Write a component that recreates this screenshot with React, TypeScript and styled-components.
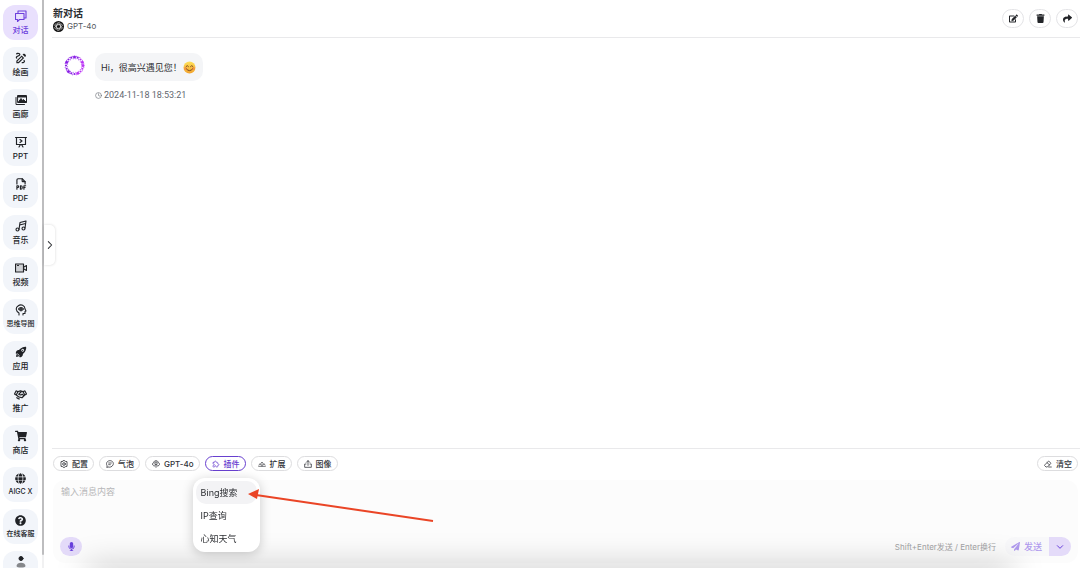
import React from 'react';
import styled, { createGlobalStyle } from 'styled-components';
import {
  FaShoppingCart, FaGlobe, FaEdit, FaTrash, FaShare, FaPaperPlane, FaMicrophone, FaQuestionCircle,
} from 'react-icons/fa';
import { TbFileTypePdf, TbPuzzle } from 'react-icons/tb';
import { IoRocket } from 'react-icons/io5';
import { PiHandshakeBold } from 'react-icons/pi';
import { MdOutlineDraw } from 'react-icons/md';
import { FiClock } from 'react-icons/fi';

const GlobalStyle = createGlobalStyle`
  * { box-sizing: border-box; }
  body {
    margin: 0;
    overflow: hidden;
    background: #fff;
    color: #2b2d31;
    font-family: Inter, "Noto Sans CJK SC", sans-serif;
    font-size: 9px;
  }
  button, textarea { font: inherit; color: inherit; }
  button { border: 0; background: none; padding: 0; cursor: pointer; }
  svg { display: block; flex: none; }
`;

const Page = styled.div`
  display: flex;
  height: 100vh;
  overflow: hidden;
`;

const Sidebar = styled.nav`
  display: flex;
  flex: none;
  flex-direction: column;
  gap: 7px;
  width: 42px;
  padding: 5px 4px 0 3px;
  overflow: hidden;
`;

const SideItem = styled.button<{ $active?: boolean; $small?: boolean }>`
  display: flex;
  flex: none;
  flex-direction: column;
  align-items: center;
  gap: 2px;
  height: 35px;
  padding-top: 5px;
  border-radius: 12px;
  background: ${(p) => (p.$active ? '#e9e0fd' : '#f2f5fa')};
  color: ${(p) => (p.$active ? '#6d3fdc' : '#202226')};
  font-size: ${(p) => (p.$small ? 7 : 8)}px;
  line-height: 12px;
  font-weight: 500;
  white-space: nowrap;
`;

const IconBox = styled.span`
  display: flex;
  align-items: center;
  justify-content: center;
  height: 12px;
`;

const ScrollTrack = styled.div`
  flex: none;
  width: 2px;
  padding-bottom: 13px;
  background: #f1f1f2;
`;

const ScrollThumb = styled.div`
  height: 100%;
  background: #bdbdbf;
  border-radius: 0 0 2px 2px;
`;

const Main = styled.main`
  position: relative;
  display: flex;
  flex: 1;
  flex-direction: column;
  min-width: 0;
  padding-left: 8px;
`;

const Handle = styled.button`
  position: absolute;
  left: 0;
  top: 225px;
  display: flex;
  align-items: center;
  justify-content: center;
  width: 11px;
  height: 40px;
  border-radius: 0 5px 5px 0;
  background: #fff;
  box-shadow: 0 0 3px rgba(0, 0, 0, 0.16);
`;

const Header = styled.header`
  display: flex;
  align-items: center;
  justify-content: space-between;
  height: 38px;
  padding: 0 2px 0 1px;
  border-bottom: 1px solid #e9e9eb;
`;

const Heading = styled.div`
  padding-top: 2px;
`;

const Title = styled.h1`
  margin: 0;
  font-size: 10px;
  line-height: 13px;
  font-weight: 700;
`;

const Model = styled.div`
  display: flex;
  align-items: center;
  gap: 3px;
  color: #55585e;
  font-size: 8px;
  line-height: 12px;
`;

const Actions = styled.div`
  display: flex;
  gap: 5px;
`;

const RoundButton = styled.button`
  display: flex;
  align-items: center;
  justify-content: center;
  width: 22px;
  height: 19px;
  border: 1px solid #e4e4e7;
  border-radius: 10px;
  color: #222428;
`;

const Conversation = styled.section`
  display: flex;
  flex: 1;
  align-items: flex-start;
  gap: 10px;
  min-height: 0;
  padding: 15px 12px;
`;

const Avatar = styled.div`
  padding-top: 2px;
`;

const Message = styled.div`
  display: flex;
  flex-direction: column;
  align-items: flex-start;
  gap: 8px;
`;

const Bubble = styled.div`
  display: flex;
  align-items: center;
  gap: 1px;
  height: 28px;
  padding: 0 7px 0 6px;
  border-radius: 10px;
  background: #f4f5f7;
  white-space: nowrap;
`;

const Time = styled.time`
  display: flex;
  align-items: center;
  gap: 2px;
  color: #63676f;
  font-family: Roboto, sans-serif;
  font-size: 9px;
  line-height: 12px;
`;

const Composer = styled.footer`
  flex: none;
  padding: 7px 2px 5px 1px;
  border-top: 1px solid #e9e9eb;
`;

const Toolbar = styled.div`
  display: flex;
  gap: 5px;
  margin-bottom: 9px;
`;

const Chip = styled.button<{ $active?: boolean; $end?: boolean }>`
  display: flex;
  align-items: center;
  gap: 4px;
  height: 15px;
  margin-left: ${(p) => (p.$end ? 'auto' : '0')};
  padding: 0 5px 0 6px;
  border: 1px solid ${(p) => (p.$active ? '#6840cf' : '#dddddf')};
  border-radius: 8px;
  color: ${(p) => (p.$active ? '#6840cf' : '#303238')};
  font-size: 8px;
  line-height: 12px;
  font-weight: 500;
  white-space: nowrap;
`;

const PluginAnchor = styled.div`
  position: relative;
`;

const Menu = styled.div`
  position: absolute;
  z-index: 3;
  left: -12px;
  top: 22px;
  width: 67px;
  padding: 3px 3px 2px;
  border-radius: 12px;
  background: #fff;
  box-shadow: 0 2px 12px rgba(0, 0, 0, 0.2);
`;

const MenuItem = styled.button<{ $active?: boolean }>`
  display: block;
  width: 100%;
  height: 23px;
  padding: 0 5px;
  border-radius: 10px;
  background: ${(p) => (p.$active ? '#f3f3f5' : 'transparent')};
  font-size: 9px;
  text-align: left;
  white-space: nowrap;
`;

const InputPanel = styled.div`
  display: flex;
  flex-direction: column;
  height: 83px;
  padding: 5px 7px 7px;
  border-radius: 12px;
  background: #fcfcfc;
`;

const Input = styled.textarea`
  flex: 1;
  width: 100%;
  padding: 0 1px;
  border: 0;
  outline: 0;
  resize: none;
  background: none;
  font-size: 9px;
  line-height: 14px;
  &::placeholder { color: #b7b7b9; opacity: 1; }
`;

const InputFooter = styled.div`
  display: flex;
  align-items: center;
  justify-content: space-between;
`;

const MicButton = styled.button`
  display: flex;
  align-items: center;
  justify-content: center;
  width: 22px;
  height: 19px;
  border-radius: 10px;
  background: #e4dbf9;
  color: #6840dc;
`;

const SendArea = styled.div`
  display: flex;
  align-items: center;
  gap: 9px;
  color: #a3a3a5;
  font-size: 8px;
`;

const SendGroup = styled.div`
  display: flex;
  height: 19px;
  overflow: hidden;
  border-radius: 10px;
  background: #f8f8fa;
`;

const SendButton = styled.button`
  display: flex;
  align-items: center;
  gap: 4px;
  padding: 0 7px 0 6px;
  color: #b09aee;
  font-size: 9px;
  font-weight: 500;
`;

const SendOptions = styled.button`
  display: flex;
  align-items: center;
  justify-content: center;
  width: 22px;
  background: #e4dbf9;
  color: #6840dc;
`;

const BottomShade = styled.div`
  position: fixed;
  z-index: 2;
  right: 70px;
  bottom: -14px;
  left: 90px;
  height: 12px;
  box-shadow: 0 0 32px 3px rgba(0, 0, 0, 0.26);
  pointer-events: none;
`;

const Arrow = styled.svg`
  position: absolute;
  z-index: 4;
  left: 43px;
  top: 31px;
  pointer-events: none;
`;

type DrawProps = { size?: number; children: React.ReactNode; weight?: number };
const Draw = ({ size = 12, children, weight = 2 }: DrawProps) => (
  <svg width={size} height={size} viewBox="0 0 24 24" fill="none" stroke="currentColor" strokeWidth={weight} strokeLinecap="round" strokeLinejoin="round" aria-hidden="true">
    {children}
  </svg>
);

const ChatIcon = () => (
  <Draw weight={2.2}><path d="M6 6V2h16v14h-3M1 7h17v12H9l-4 4v-4H1Z" /></Draw>
);
const GalleryIcon = () => (
  <Draw>
    <path d="M6 3h17v14H6ZM2 7v14h17" />
    <path d="m7 16 5-7 3 4 2-2 5 5Z" fill="currentColor" />
    <path d="M6 4h16v2H6Z" fill="currentColor" />
  </Draw>
);
const SlidesIcon = () => (
  <Draw weight={2.3}><path d="M1 3h22M3 3v14h18V3M8 22l3-5M16 22l-3-5M10 7l4 3-4 3" /></Draw>
);
const MusicIcon = () => (
  <Draw weight={2.2}>
    <path d="M8 19 10 5l12-3-2 14M9.500 10 21 7" />
    <circle cx="5" cy="19" r="3" />
    <circle cx="17" cy="17" r="3" />
  </Draw>
);
const VideoIcon = () => (
  <Draw weight={2.3}>
    <path d="M1 4h16v16H1Z" fill="#cfd1d5" />
    <path d="m18 10 5-3v10l-5-3M5 7h2" />
  </Draw>
);
const MindIcon = () => (
  <Draw weight={2.2}>
    <path d="M8 22v-4C1 14 1 7 6 4c6-5 14-1 14 6l2 4-2 1v4h-4v3" />
    <path d="M7 10c2-4 8-4 10 0-2 4-8 4-10 0M12 8v6M10 10h4" />
  </Draw>
);
const UserIcon = () => (
  <Draw>
    <circle cx="12" cy="5" r="4" fill="currentColor" />
    <path d="M3 20c0-9 18-9 18 0 0 4-18 4-18 0Z" fill="#85878b" stroke="none" />
  </Draw>
);
const GearIcon = () => (
  <Draw size={8} weight={2.5}>
    <path d="m12 1 4 3 5 1v5l1 2-1 2v5l-5 1-4 3-4-3-5-1v-5l-1-2 1-2V5l5-1Z" />
    <circle cx="12" cy="12" r="4" />
  </Draw>
);
const BubbleIcon = () => (
  <Draw size={8} weight={2.3}><path d="M3 22v-5C-1 9 4 2 12 2s12 7 9 13-10 8-15 6ZM8 9h8M8 14h5" /></Draw>
);
const ModelIcon = () => (
  <Draw size={8} weight={2.3}><path d="M8 18C0 18 0 9 5 8c1-8 13-8 14 0 6 2 5 10-3 10M12 8v14M8 12l4 3 4-3M8 8l4-3 4 3" /></Draw>
);
const ExtendIcon = () => (
  <Draw size={8}><path d="M2 19h20M3 15l3-4 3 4M15 15l3-4 3 4M9 10l3-4 3 4M12 12v6" /></Draw>
);
const UploadIcon = () => (
  <Draw size={8} weight={2.3}><path d="M6 12H2v10h20V12h-4M12 16V2M7 7l5-5 5 5" /></Draw>
);
const EraserIcon = () => (
  <Draw size={8} weight={2.3}><path d="M3 14 14 3l7 7-11 11H6l-4-4ZM9 8l8 7M14 21h8" /></Draw>
);

const OpenAiIcon = () => (
  <svg width="11" height="11" viewBox="0 0 22 22" aria-hidden="true">
    <circle cx="11" cy="11" r="11" fill="#111" />
    <g fill="none" stroke="#fff" strokeWidth="1">
      {[0, 60, 120, 180, 240, 300].map((a) => (
        <path key={a} d="M8 10V6c0-3 4-4 6-2M8 8l4-2 4 2" transform={`rotate(${a} 11 11)`} />
      ))}
    </g>
  </svg>
);

const AvatarIcon = () => (
  <svg width="21" height="21" viewBox="0 0 42 42" aria-hidden="true">
    {Array.from({ length: 16 }, (_, i) => {
      const a = (i * Math.PI) / 8;
      return (
        <g key={i} fill={i < 4 || i > 13 ? '#bb35f5' : '#8a1fe6'}>
          <circle cx={21 + 17 * Math.cos(a)} cy={21 + 17 * Math.sin(a)} r={i % 3 === 0 ? 3 : 2.2} />
          <circle cx={21 + 14 * Math.cos(a + 0.2)} cy={21 + 14 * Math.sin(a + 0.2)} r="1" />
          <circle cx={21 + 19 * Math.cos(a + 0.2)} cy={21 + 19 * Math.sin(a + 0.2)} r="1" />
        </g>
      );
    })}
  </svg>
);

const SmileIcon = () => (
  <svg width="13" height="13" viewBox="0 0 26 26" role="img" aria-label="微笑">
    <defs>
      <linearGradient id="smile" x1="0" y1="0" x2="0" y2="1">
        <stop offset="0" stopColor="#ffe15a" />
        <stop offset="1" stopColor="#f2a22c" />
      </linearGradient>
    </defs>
    <circle cx="13" cy="13" r="12" fill="url(#smile)" />
    <circle cx="5" cy="15" r="3" fill="#f47b48" opacity=".6" />
    <circle cx="21" cy="15" r="3" fill="#f47b48" opacity=".6" />
    <path d="M6 11q2.500-4 5 0M15 11q2.500-4 5 0M7 16q6 7 12 0" fill="none" stroke="#70401c" strokeWidth="1.800" strokeLinecap="round" />
  </svg>
);

const navigation = [
  { label: '对话', icon: <ChatIcon />, active: true },
  { label: '绘画', icon: <MdOutlineDraw size={14} /> },
  { label: '画廊', icon: <GalleryIcon /> },
  { label: 'PPT', icon: <SlidesIcon /> },
  { label: 'PDF', icon: <TbFileTypePdf size={14} /> },
  { label: '音乐', icon: <MusicIcon /> },
  { label: '视频', icon: <VideoIcon /> },
  { label: '思维导图', icon: <MindIcon />, small: true },
  { label: '应用', icon: <IoRocket size={12} /> },
  { label: '推广', icon: <PiHandshakeBold size={13} /> },
  { label: '商店', icon: <FaShoppingCart size={12} /> },
  { label: 'AIGC X', icon: <FaGlobe size={11} />, small: true },
  { label: '在线客服', icon: <FaQuestionCircle size={11} />, small: true },
];

export default function App() {
  return (
    <Page>
      <GlobalStyle />
      <Sidebar>
        {navigation.map((item) => (
          <SideItem key={item.label} $active={item.active} $small={item.small}>
            <IconBox>{item.icon}</IconBox>
            <span>{item.label}</span>
          </SideItem>
        ))}
        <SideItem aria-label="我的">
          <IconBox><UserIcon /></IconBox>
        </SideItem>
      </Sidebar>
      <ScrollTrack><ScrollThumb /></ScrollTrack>
      <Main>
        <Handle aria-label="展开">
          <Draw size={10} weight={2.5}><path d="m8 4 8 8-8 8" /></Draw>
        </Handle>
        <Header>
          <Heading>
            <Title>新对话</Title>
            <Model><OpenAiIcon />GPT-4o</Model>
          </Heading>
          <Actions>
            <RoundButton aria-label="编辑"><FaEdit size={9} /></RoundButton>
            <RoundButton aria-label="删除"><FaTrash size={9} /></RoundButton>
            <RoundButton aria-label="分享"><FaShare size={9} /></RoundButton>
          </Actions>
        </Header>
        <Conversation>
          <Avatar><AvatarIcon /></Avatar>
          <Message>
            <Bubble><span>Hi，很高兴遇见您！</span><SmileIcon /></Bubble>
            <Time><FiClock size={7} />2024-11-18 18:53:21</Time>
          </Message>
        </Conversation>
        <Composer>
          <Toolbar>
            <Chip><GearIcon />配置</Chip>
            <Chip><BubbleIcon />气泡</Chip>
            <Chip><ModelIcon />GPT-4o</Chip>
            <PluginAnchor>
              <Chip $active><TbPuzzle size={8} />插件</Chip>
              <Menu>
                <MenuItem $active>Bing搜索</MenuItem>
                <MenuItem>IP查询</MenuItem>
                <MenuItem>心知天气</MenuItem>
              </Menu>
              <Arrow width="186" height="36" viewBox="0 0 186 36" aria-hidden="true">
                <path d="M8 8 185 34" stroke="#ea4526" strokeWidth="2" />
                <path d="m0 7 11-5-2 10Z" fill="#ea4526" />
              </Arrow>
            </PluginAnchor>
            <Chip><ExtendIcon />扩展</Chip>
            <Chip><UploadIcon />图像</Chip>
            <Chip $end><EraserIcon />清空</Chip>
          </Toolbar>
          <InputPanel>
            <Input aria-label="消息内容" placeholder="输入消息内容" />
            <InputFooter>
              <MicButton aria-label="语音输入"><FaMicrophone size={9} /></MicButton>
              <SendArea>
                <span>Shift+Enter发送 / Enter换行</span>
                <SendGroup>
                  <SendButton><FaPaperPlane size={9} />发送</SendButton>
                  <SendOptions aria-label="发送选项">
                    <Draw size={8} weight={3}><path d="m4 8 8 8 8-8" /></Draw>
                  </SendOptions>
                </SendGroup>
              </SendArea>
            </InputFooter>
          </InputPanel>
        </Composer>
      </Main>
      <BottomShade />
    </Page>
  );
}
